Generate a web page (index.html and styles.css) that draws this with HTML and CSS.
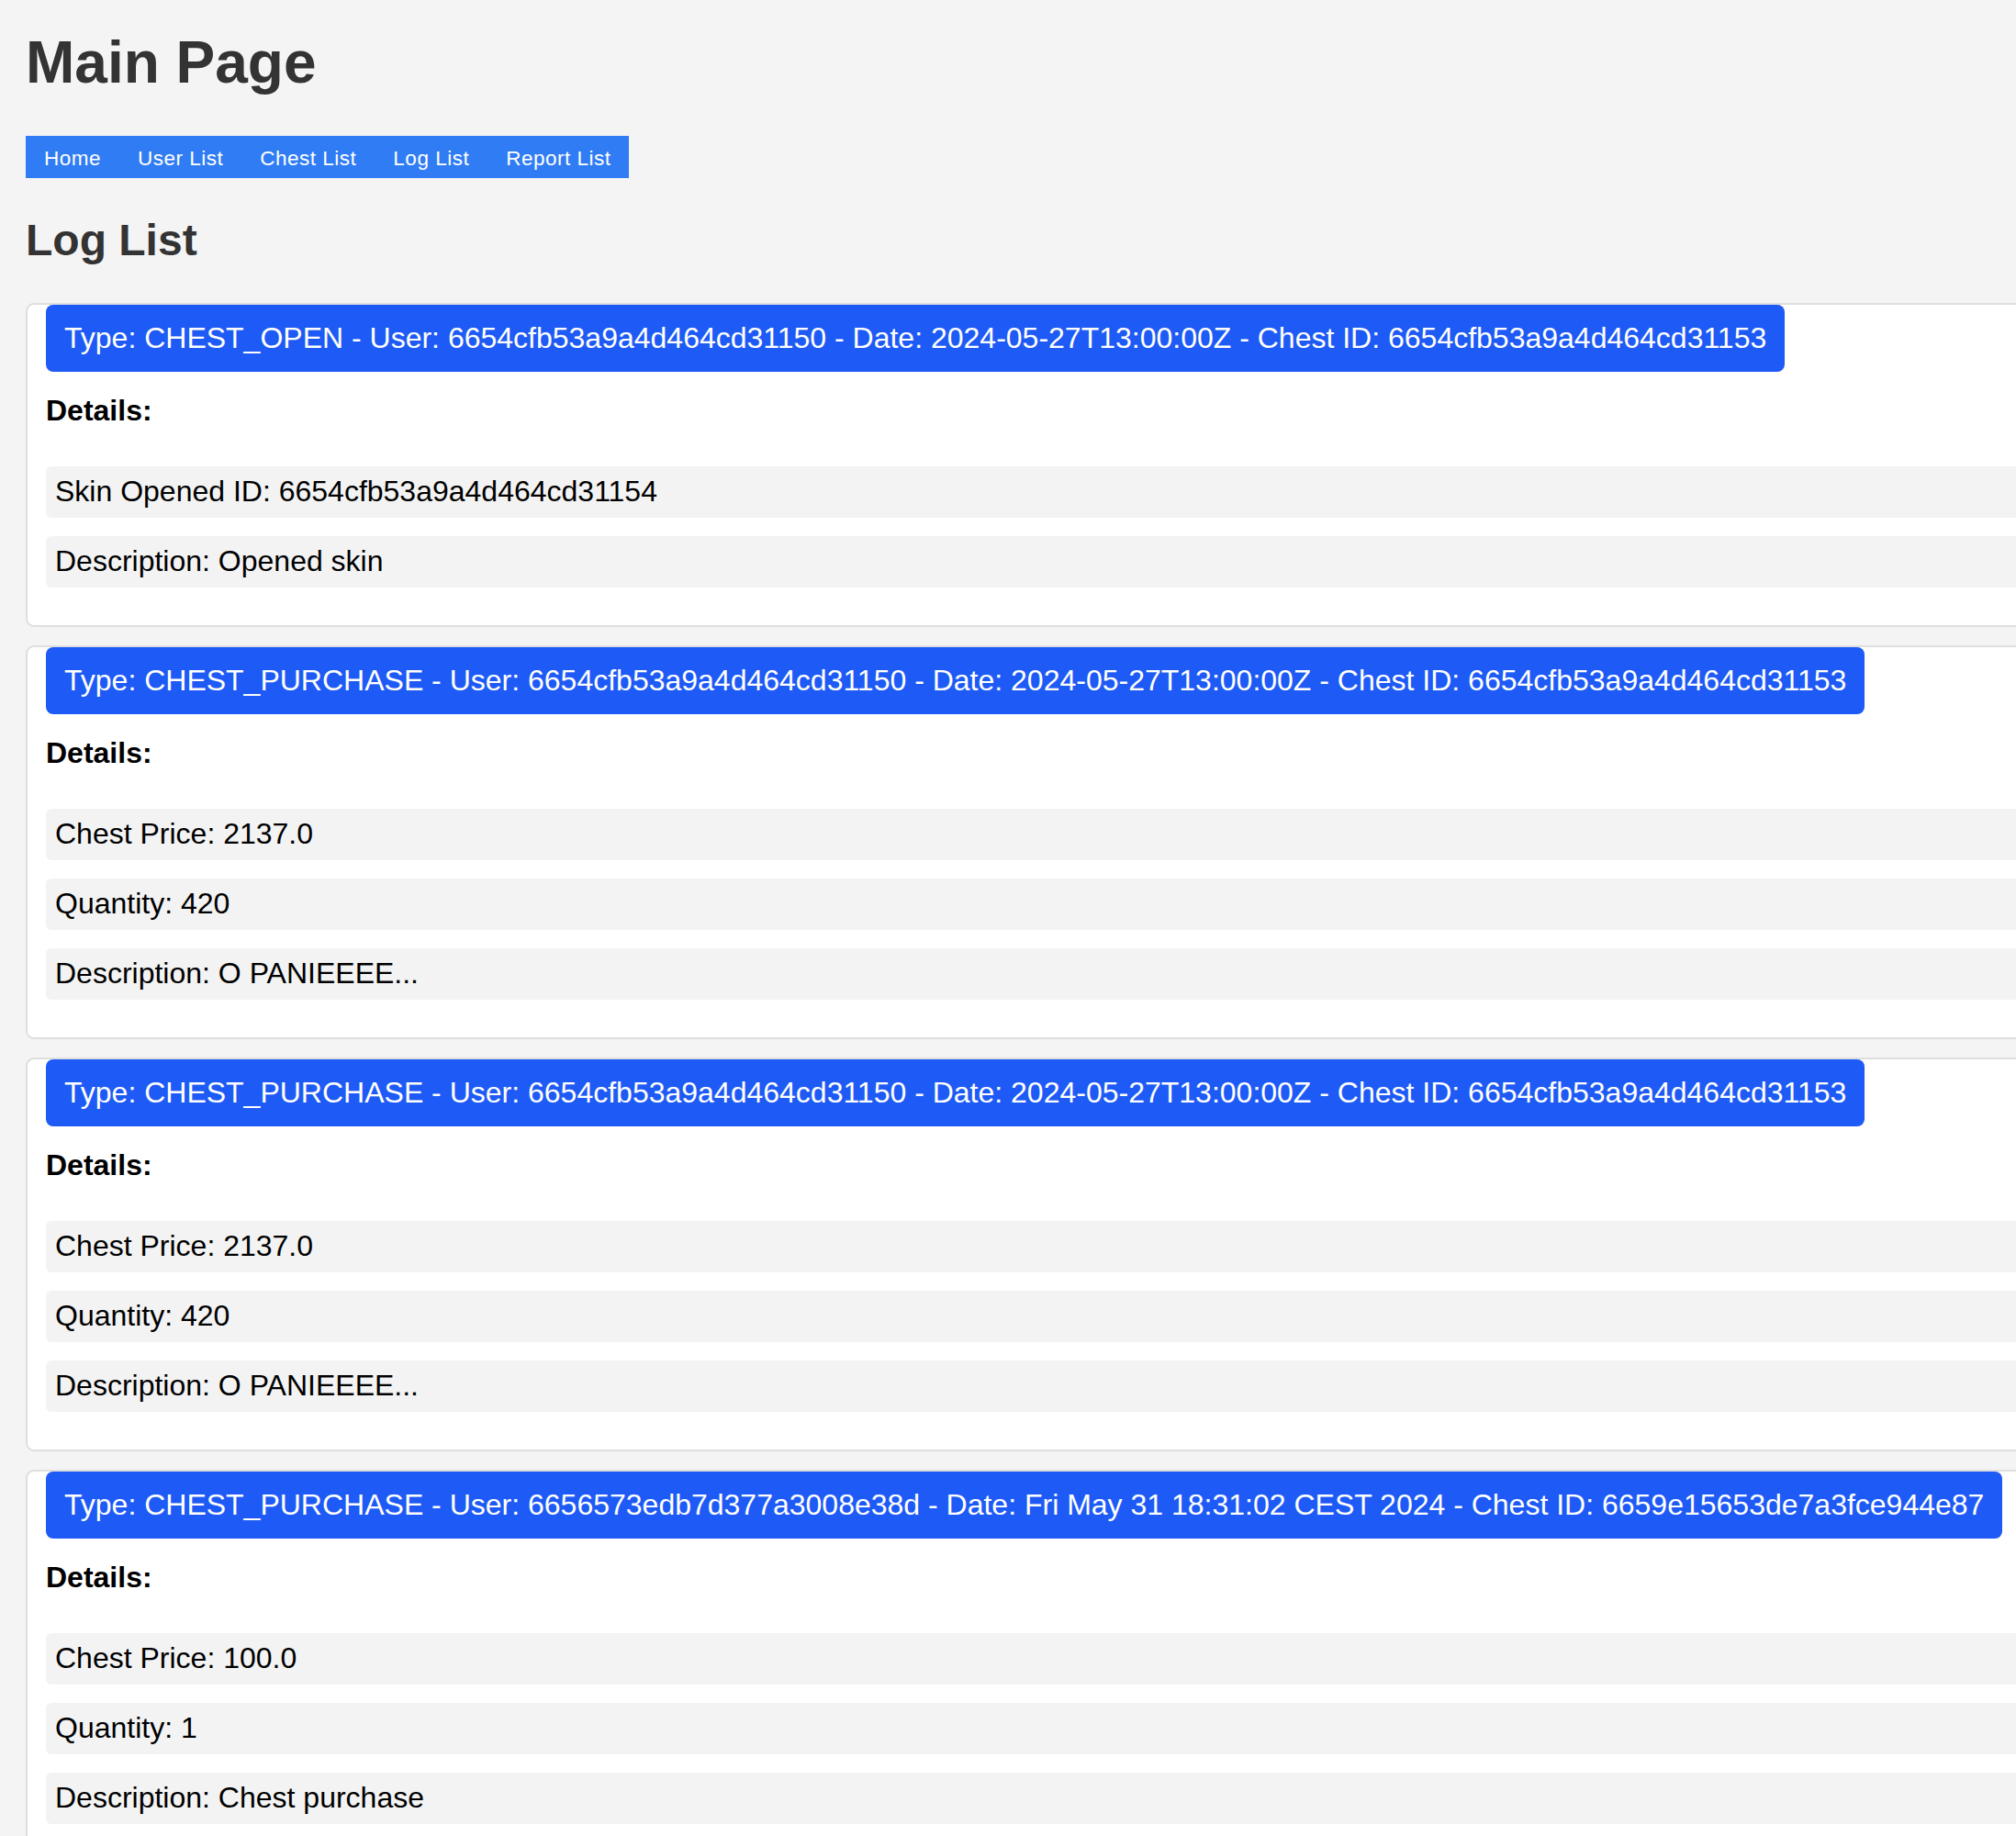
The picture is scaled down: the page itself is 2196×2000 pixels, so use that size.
FILE: index.html
```html
<!DOCTYPE html>
<html lang="en">
<head>
<meta charset="utf-8">
<title>Main Page</title>
<link rel="stylesheet" href="styles.css">
</head>
<body>
<h1 class="page-title">Main Page</h1>
<nav class="main-nav">
  <a href="#" class="nav-link">Home</a>
  <a href="#" class="nav-link">User List</a>
  <a href="#" class="nav-link">Chest List</a>
  <a href="#" class="nav-link">Log List</a>
  <a href="#" class="nav-link">Report List</a>
</nav>
<h2 class="section-title">Log List</h2>

<div class="log-list">
  <div class="log-card">
    <div class="log-header">Type: CHEST_OPEN - User: 6654cfb53a9a4d464cd31150 - Date: 2024-05-27T13:00:00Z - Chest ID: 6654cfb53a9a4d464cd31153</div>
    <p class="details-label">Details:</p>
    <ul class="detail-list">
      <li class="detail-row">Skin Opened ID: 6654cfb53a9a4d464cd31154</li>
      <li class="detail-row">Description: Opened skin</li>
    </ul>
  </div>

  <div class="log-card">
    <div class="log-header">Type: CHEST_PURCHASE - User: 6654cfb53a9a4d464cd31150 - Date: 2024-05-27T13:00:00Z - Chest ID: 6654cfb53a9a4d464cd31153</div>
    <p class="details-label">Details:</p>
    <ul class="detail-list">
      <li class="detail-row">Chest Price: 2137.0</li>
      <li class="detail-row">Quantity: 420</li>
      <li class="detail-row">Description: O PANIEEEE...</li>
    </ul>
  </div>

  <div class="log-card">
    <div class="log-header">Type: CHEST_PURCHASE - User: 6654cfb53a9a4d464cd31150 - Date: 2024-05-27T13:00:00Z - Chest ID: 6654cfb53a9a4d464cd31153</div>
    <p class="details-label">Details:</p>
    <ul class="detail-list">
      <li class="detail-row">Chest Price: 2137.0</li>
      <li class="detail-row">Quantity: 420</li>
      <li class="detail-row">Description: O PANIEEEE...</li>
    </ul>
  </div>

  <div class="log-card">
    <div class="log-header">Type: CHEST_PURCHASE - User: 6656573edb7d377a3008e38d - Date: Fri May 31 18:31:02 CEST 2024 - Chest ID: 6659e15653de7a3fce944e87</div>
    <p class="details-label">Details:</p>
    <ul class="detail-list">
      <li class="detail-row">Chest Price: 100.0</li>
      <li class="detail-row">Quantity: 1</li>
      <li class="detail-row">Description: Chest purchase</li>
    </ul>
  </div>
</div>
</body>
</html>
```
FILE: styles.css
```css
html {
  background: #f4f4f4;
}

body {
  margin: 0;
  padding: 31px 28px 0;
  background: #f4f4f4;
  font-family: "Liberation Sans", Arial, Helvetica, sans-serif;
  font-size: 32px;
  color: #000;
  overflow-x: hidden;
}

.page-title {
  margin: 0;
  font-size: 64px;
  font-weight: bold;
  color: #333;
  line-height: normal;
}

.main-nav {
  display: flex;
  width: fit-content;
  margin-top: 43px;
  background: #307cf4;
  padding-top: 3px;
  height: 43px;
}

.nav-link {
  display: block;
  padding: 0 20px;
  line-height: 43px;
  font-size: 22.5px;
  letter-spacing: 0.5px;
  color: #fff;
  text-decoration: none;
}

.section-title {
  margin: 40px 0 0;
  font-size: 48px;
  font-weight: bold;
  color: #333;
  line-height: normal;
}

.log-list {
  margin-top: 41px;
}

.log-card {
  width: calc(100% + 80px);
  box-sizing: content-box;
  background: #fff;
  border: 2px solid #dedede;
  border-radius: 9px;
  padding: 0 20px 21px;
  margin-bottom: 20px;
}

.log-header {
  width: fit-content;
  background: #1e5af5;
  color: #fff;
  padding: 18px 20px;
  border-radius: 8px;
  line-height: normal;
}

.details-label {
  margin: 24px 0 42px;
  font-weight: bold;
  line-height: normal;
}

.detail-list {
  list-style: none;
  margin: 0;
  padding: 0;
}

.detail-row {
  background: #f3f3f3;
  border-radius: 6px;
  padding: 8px 10px 10px;
  line-height: 38px;
  margin-bottom: 20px;
}
```
